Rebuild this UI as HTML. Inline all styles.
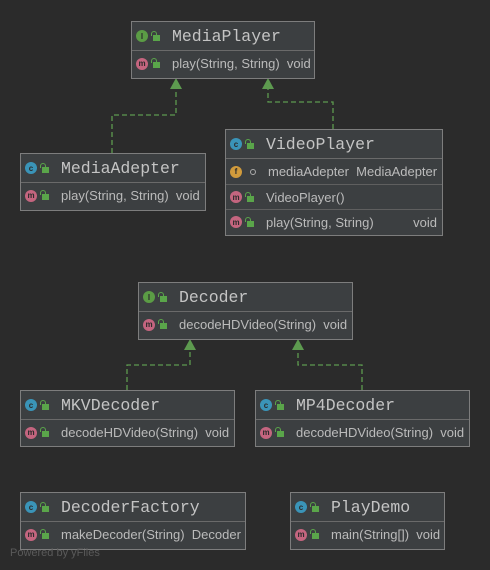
<!DOCTYPE html><html><head><style>
body{margin:0;width:490px;height:570px;background:#2b2b2b;position:relative;overflow:hidden;font-family:"Liberation Sans",sans-serif}
.b{position:absolute;background:#3c3f41;border:1px solid #7d7d7d;box-sizing:border-box}
.h{height:29px;border-bottom:1px solid #6a6a6a;box-sizing:border-box;display:flex;align-items:center;padding-left:4px;font-family:"Liberation Mono",monospace;font-size:16.5px;color:#c4c4c4}
.r{height:25px;border-top:1px solid #5f5f5f;box-sizing:border-box;display:flex;align-items:center;padding-left:4px;font-size:13px;color:#bbbbbb;white-space:nowrap}
.h + .r{border-top:none}
.ic{width:12px;height:12px;border-radius:50%;display:inline-flex;align-items:center;justify-content:center;font-size:8px;font-weight:bold;font-family:"Liberation Sans",sans-serif;color:#2b2b2b;margin-right:5px;flex:none}
.I{background:#5b9c45;}.C{background:#3a94b8}.M{background:#c4657f}.F{background:#d19b3c}
.lk{width:7px;height:6px;background:#5aa54a;margin-right:12px;margin-top:3px;flex:none;position:relative}
.lk:before{content:"";position:absolute;left:-2px;top:-4px;width:4px;height:4px;border:1.5px solid #5aa54a;border-bottom:none;border-radius:3px 3px 0 0}
.dot{width:4px;height:4px;border:1px solid #aaa;border-radius:50%;margin:0 12px 0 3px;flex:none}
</style></head><body>
<svg width="490" height="570" style="position:absolute;left:0;top:0">
<g stroke="#5d9a4f" stroke-width="1.3" stroke-dasharray="5,3" fill="none">
<path d="M112 153V115H176V88"/><path d="M333 129V102H268V88"/>
<path d="M127 390V365H190V349"/><path d="M362 390V365H298V349"/>
</g>
<g fill="#5d9a4f"><path d="M176 78l-6 11h12z"/><path d="M268 78l-6 11h12z"/><path d="M190 339l-6 11h12z"/><path d="M298 339l-6 11h12z"/></g>
</svg>
<div class="b" style="left:131px;top:21px;width:184px;height:58px"><div class="h"><span class="ic I">I</span><span class="lk"></span>MediaPlayer</div><div class="r"><span class="ic M">m</span><span class="lk"></span>play(String, String)&nbsp; void</div></div>
<div class="b" style="left:20px;top:153px;width:186px;height:58px"><div class="h"><span class="ic C">c</span><span class="lk"></span>MediaAdepter</div><div class="r"><span class="ic M">m</span><span class="lk"></span>play(String, String)&nbsp; void</div></div>
<div class="b" style="left:225px;top:129px;width:218px;height:107px"><div class="h"><span class="ic C">c</span><span class="lk"></span>VideoPlayer</div><div class="r"><span class="ic F">f</span><span class="dot"></span>mediaAdepter&nbsp; MediaAdepter</div><div class="r"><span class="ic M">m</span><span class="lk"></span>VideoPlayer()</div><div class="r"><span class="ic M">m</span><span class="lk"></span>play(String, String)<span style="margin-left:auto;margin-right:5px">void</span></div></div>
<div class="b" style="left:138px;top:282px;width:215px;height:58px"><div class="h"><span class="ic I">I</span><span class="lk"></span>Decoder</div><div class="r"><span class="ic M">m</span><span class="lk"></span>decodeHDVideo(String)&nbsp; void</div></div>
<div class="b" style="left:20px;top:390px;width:215px;height:57px"><div class="h"><span class="ic C">c</span><span class="lk"></span>MKVDecoder</div><div class="r"><span class="ic M">m</span><span class="lk"></span>decodeHDVideo(String)&nbsp; void</div></div>
<div class="b" style="left:255px;top:390px;width:215px;height:57px"><div class="h"><span class="ic C">c</span><span class="lk"></span>MP4Decoder</div><div class="r"><span class="ic M">m</span><span class="lk"></span>decodeHDVideo(String)&nbsp; void</div></div>
<div class="b" style="left:20px;top:492px;width:226px;height:58px"><div class="h"><span class="ic C">c</span><span class="lk"></span>DecoderFactory</div><div class="r"><span class="ic M">m</span><span class="lk"></span>makeDecoder(String)&nbsp; Decoder</div></div>
<div class="b" style="left:290px;top:492px;width:155px;height:58px"><div class="h"><span class="ic C">c</span><span class="lk"></span>PlayDemo</div><div class="r"><span class="ic M">m</span><span class="lk"></span>main(String[])&nbsp; void</div></div>
<div style="position:absolute;left:10px;top:547px;font-size:11px;color:#5a5a5a">Powered by yFiles</div>
</body></html>
